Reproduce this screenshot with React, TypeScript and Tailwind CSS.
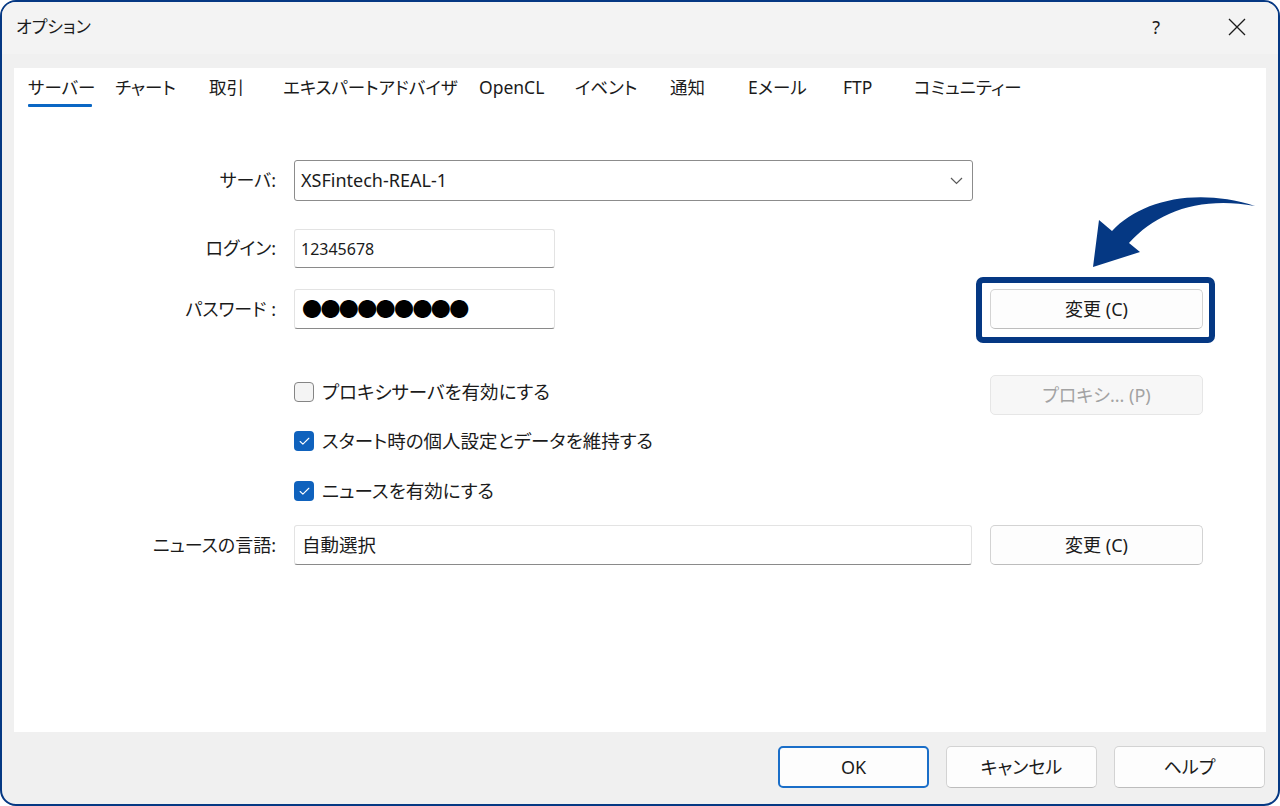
import { Check } from "lucide-react";

const tabs = [
  { label: "サーバー", w: "w-[87px]", active: true },
  { label: "チャート", w: "w-[94px]" },
  { label: "取引", w: "w-[74px]" },
  { label: "エキスパートアドバイザ", w: "w-[196px]" },
  { label: "OpenCL", w: "w-[96px]" },
  { label: "イベント", w: "w-[95px]" },
  { label: "通知", w: "w-[78px]" },
  { label: "Eメール", w: "w-[95px]" },
  { label: "FTP", w: "w-[71px]" },
  { label: "コミュニティー", w: "w-[120px]" },
];

function Label({ children }: { children: React.ReactNode }) {
  return <div className="w-[262px] shrink-0 text-right text-[18px] text-[#1b1b1b]">{children}</div>;
}

function Btn({ children, disabled = false }: { children: React.ReactNode; disabled?: boolean }) {
  return (
    <button
      className={`h-[40px] w-[213px] rounded-[5px] border text-[18px] ${
        disabled
          ? "border-[#e6e6e6] bg-[#f7f7f7] text-[#a3a3a3]"
          : "border-[#d3d3d3] border-b-[#bdbdbd] bg-[#fdfdfd] text-[#1b1b1b]"
      }`}
    >
      {children}
    </button>
  );
}

function CheckRow({ checked, label, className = "" }: { checked: boolean; label: string; className?: string }) {
  return (
    <div className={`flex h-[24px] items-center gap-[8px] ${className}`}>
      {checked ? (
        <span className="flex h-[20px] w-[20px] items-center justify-center rounded-[4px] bg-[#0f62bd]">
          <Check size={13} strokeWidth={2} color="#ffffff" />
        </span>
      ) : (
        <span className="h-[20px] w-[20px] rounded-[4px] border border-[#858585] bg-[#f4f4f4]" />
      )}
      <span className="text-[18.5px] text-[#1b1b1b]">{label}</span>
    </div>
  );
}

export default function App() {
  return (
    <div className="relative flex h-[806px] w-[1280px] flex-col overflow-hidden rounded-[16px] border-2 border-[#053883] bg-[#f0f0f0] font-['Noto_Sans','Noto_Sans_CJK_JP',sans-serif] text-[17px] [font-feature-settings:'palt']">
      {/* title bar */}
      <div className="flex h-[52px] shrink-0 items-center bg-[#f3f3f3] pl-[14px] text-[17px] text-[#1b1b1b]">
        <span className="mt-[-2px]">オプション</span>
        <span className="ml-auto mr-[68px] mt-[-2px] text-[18px]">?</span>
        <svg width="18" height="18" viewBox="0 0 18 18" className="mr-[32px] mt-[-2px]">
          <path d="M1 1 L17 17 M17 1 L1 17" stroke="#1b1b1b" strokeWidth="1.3" />
        </svg>
      </div>

      {/* body */}
      <div className="flex flex-1 flex-col px-[12px] pt-[14px]">
        <div className="h-[664px] bg-white">
          {/* tabs */}
          <div className="flex pl-[14px] pt-[7px]">
            {tabs.map((t) => (
              <div key={t.label} className={`${t.w} shrink-0`}>
                <div className="whitespace-nowrap text-[17.5px] leading-[24px] text-[#1b1b1b]">{t.label}</div>
                {t.active ? <div className="mt-[5px] h-[3px] w-[64px] rounded-[1px] bg-[#0a67c4]" /> : null}
              </div>
            ))}
          </div>

          {/* form */}
          <div className="flex flex-col pr-[63px]">
            <div className="mt-[53px] flex items-center gap-[18px]">
              <Label>サーバ:</Label>
              <div className="flex h-[41px] w-[679px] items-center rounded-[3px] border border-[#8c8c8c] bg-white pl-[6px] pr-[9px] text-[18px] text-[#1b1b1b]">
                <span>XSFintech-REAL-1</span>
                <svg width="13" height="8" viewBox="0 0 13 8" className="ml-auto">
                  <path d="M1 1 L6.5 6.5 L12 1" fill="none" stroke="#5a5a5a" strokeWidth="1.2" />
                </svg>
              </div>
            </div>

            <div className="mt-[28px] flex items-center gap-[18px]">
              <Label>ログイン:</Label>
              <div className="flex h-[39px] w-[261px] items-center rounded-[3px] border border-[#e3e3e3] border-b-[#8a8a8a] bg-white pl-[6px] text-[16px] text-[#1b1b1b]">
                12345678
              </div>
            </div>

            <div className="mt-[21px] flex items-center gap-[18px]">
              <Label>パスワード :</Label>
              <div className="flex h-[40px] w-[261px] items-center rounded-[3px] border border-[#e3e3e3] border-b-[#8a8a8a] bg-white pl-[7px] font-['Noto_Sans_CJK_JP',sans-serif] text-[20px] tracking-[-1.6px] text-black">
                ●●●●●●●●●
              </div>
              <div className="relative ml-auto">
                <Btn>変更 (C)</Btn>
                <div className="pointer-events-none absolute -bottom-[14px] -left-[14px] -right-[12px] -top-[12px] rounded-[7px] border-[6px] border-[#053883]" />
              </div>
            </div>

            <div className="mt-[46px] flex items-start">
              <div className="ml-[280px] pt-[5px]">
                <CheckRow checked={false} label="プロキシサーバを有効にする" />
              </div>
              <div className="ml-auto">
                <Btn disabled>プロキシ... (P)</Btn>
              </div>
            </div>

            <CheckRow checked label="スタート時の個人設定とデータを維持する" className="ml-[280px] mt-[14px]" />
            <CheckRow checked label="ニュースを有効にする" className="ml-[280px] mt-[26px]" />

            <div className="mt-[22px] flex items-center gap-[18px]">
              <Label>ニュースの言語:</Label>
              <div className="flex h-[40px] w-[679px] items-center rounded-[3px] border border-[#e3e3e3] border-b-[#8a8a8a] bg-white pl-[7px] text-[18.5px] text-[#1b1b1b]">
                自動選択
              </div>
              <div className="ml-auto">
                <Btn>変更 (C)</Btn>
              </div>
            </div>
          </div>
        </div>

        {/* footer */}
        <div className="mt-[14px] flex justify-end gap-[17px] pr-[1px]">
          <button className="h-[42px] w-[151px] rounded-[5px] border-2 border-[#1a6ec8] bg-[#fdfdfd] text-[18px] text-[#1b1b1b]">
            OK
          </button>
          <button className="h-[42px] w-[151px] rounded-[5px] border border-[#d3d3d3] border-b-[#bdbdbd] bg-[#fdfdfd] text-[18px] text-[#1b1b1b]">
            キャンセル
          </button>
          <button className="h-[42px] w-[151px] rounded-[5px] border border-[#d3d3d3] border-b-[#bdbdbd] bg-[#fdfdfd] text-[18px] text-[#1b1b1b]">
            ヘルプ
          </button>
        </div>
      </div>

      {/* annotation arrow */}
      <svg width="180" height="80" viewBox="0 0 180 80" className="pointer-events-none absolute left-[1083px] top-[188px]">
        <path d="M8 77 L14 30 L27 41 C55 11 110 -3 170 16 C115 6 72 22 44 53 L55 62 Z" fill="#053883" />
      </svg>
    </div>
  );
}
